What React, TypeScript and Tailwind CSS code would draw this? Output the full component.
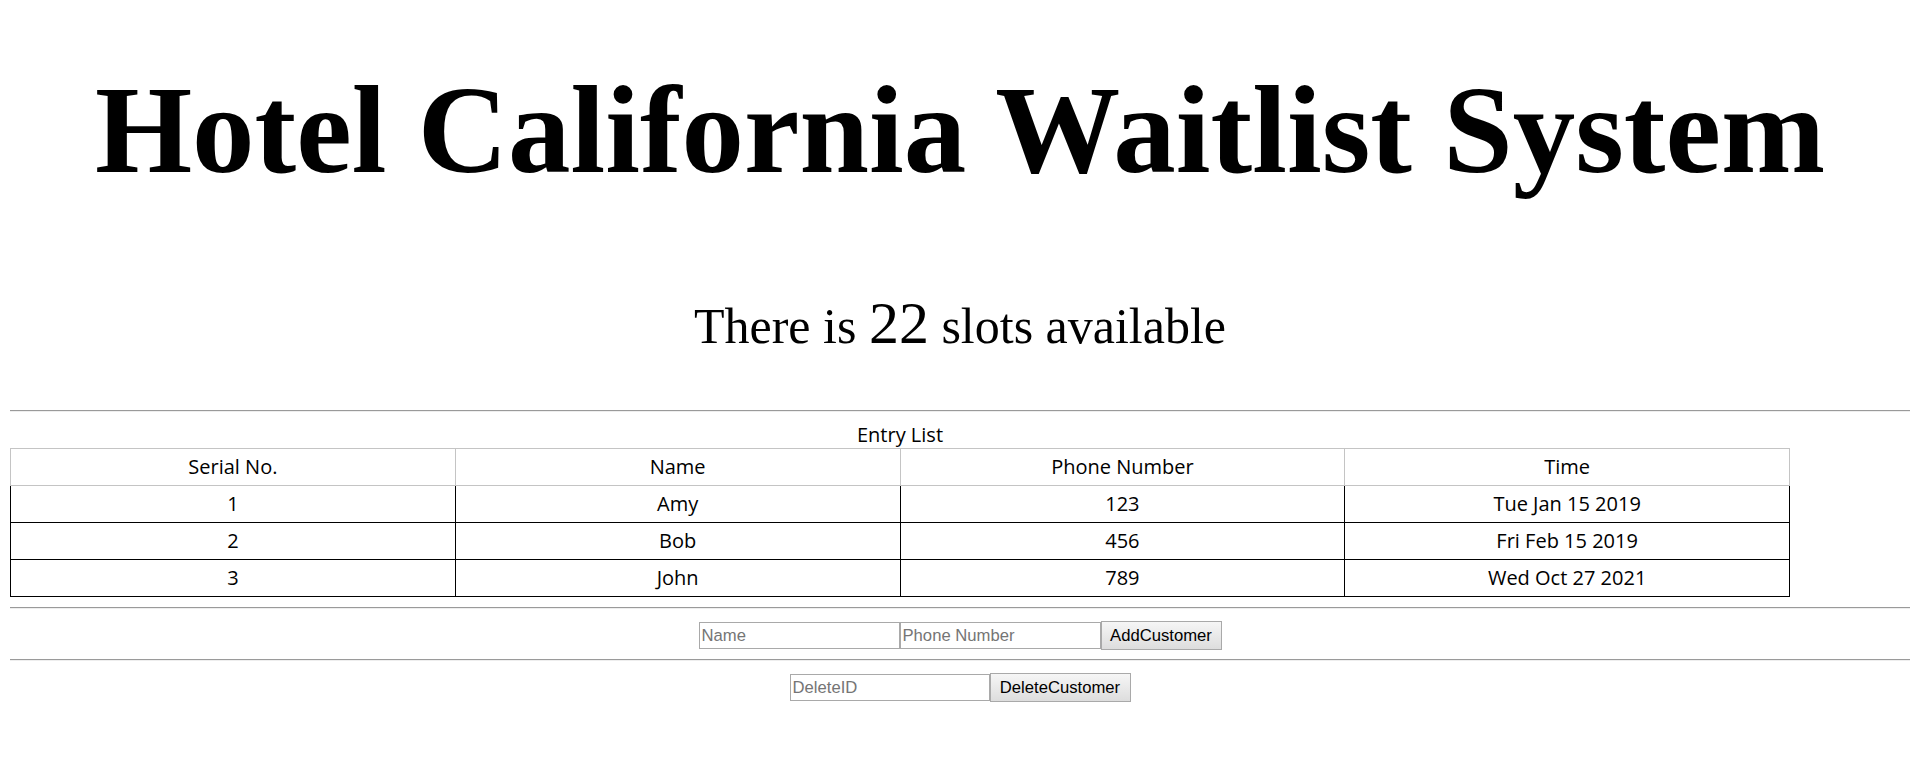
export default function App() {
  const headers = ["Serial No.", "Name", "Phone Number", "Time"];
  const rows = [
    ["1", "Amy", "123", "Tue Jan 15 2019"],
    ["2", "Bob", "456", "Fri Feb 15 2019"],
    ["3", "John", "789", "Wed Oct 27 2021"],
  ];
  return (
    <div className="h-[763px] w-full overflow-hidden bg-white px-[10px] pt-[58px] text-black">
      <h1 className="h-[144px] whitespace-nowrap text-center font-['Liberation_Serif',serif] text-[125px] font-bold leading-[144px]">
        Hotel California Waitlist System
      </h1>
      <p className="mt-[91px] h-[63px] text-center font-['Liberation_Serif',serif] text-[50px] leading-[60px]">
        There is <span className="text-[60px]">22</span> slots available
      </p>
      <div className="mt-[54px] h-0 border-t border-b border-t-[#9a9a9a] border-b-[#eeeeee]" />
      <div className="mt-[10px] w-[1780px] font-['Open_Sans',sans-serif] text-[20px]">
        <div className="h-[26px] text-center leading-[26px]">Entry List</div>
        <table className="w-full table-fixed border-collapse">
          <thead>
            <tr>
              {headers.map((h) => (
                <th
                  key={h}
                  className="h-[37px] border border-[#c4c4c4] p-0 text-center font-normal leading-[26px]"
                >
                  {h}
                </th>
              ))}
            </tr>
          </thead>
          <tbody>
            {rows.map((r) => (
              <tr key={r[0]}>
                {r.map((c, i) => (
                  <td
                    key={i}
                    className="h-[37px] border-x border-b border-black p-0 text-center leading-[26px]"
                  >
                    {c}
                  </td>
                ))}
              </tr>
            ))}
          </tbody>
        </table>
      </div>
      <div className="mt-[10px] h-0 border-t border-b border-t-[#9a9a9a] border-b-[#eeeeee]" />
      <div className="mt-[12px] flex items-center justify-center font-['Liberation_Sans',Arial,sans-serif] text-[16.67px]">
        <input
          placeholder="Name"
          className="h-[27px] w-[201px] border border-[#a9a9a9] px-[2px] outline-none placeholder:text-[#757575]"
        />
        <input
          placeholder="Phone Number"
          className="h-[27px] w-[201px] border border-[#a9a9a9] px-[2px] outline-none placeholder:text-[#757575]"
        />
        <button className="h-[29px] w-[121px] border border-[#a9a9a9] bg-gradient-to-b from-[#f6f6f6] to-[#dddddd] text-black">
          AddCustomer
        </button>
      </div>
      <div className="mt-[9px] h-0 border-t border-b border-t-[#9a9a9a] border-b-[#eeeeee]" />
      <div className="mt-[12px] flex items-center justify-center font-['Liberation_Sans',Arial,sans-serif] text-[16.67px]">
        <input
          placeholder="DeleteID"
          className="h-[27px] w-[200px] border border-[#a9a9a9] px-[2px] outline-none placeholder:text-[#757575]"
        />
        <button className="h-[29px] w-[141px] border border-[#a9a9a9] bg-gradient-to-b from-[#f6f6f6] to-[#dddddd] text-black">
          DeleteCustomer
        </button>
      </div>
    </div>
  );
}
